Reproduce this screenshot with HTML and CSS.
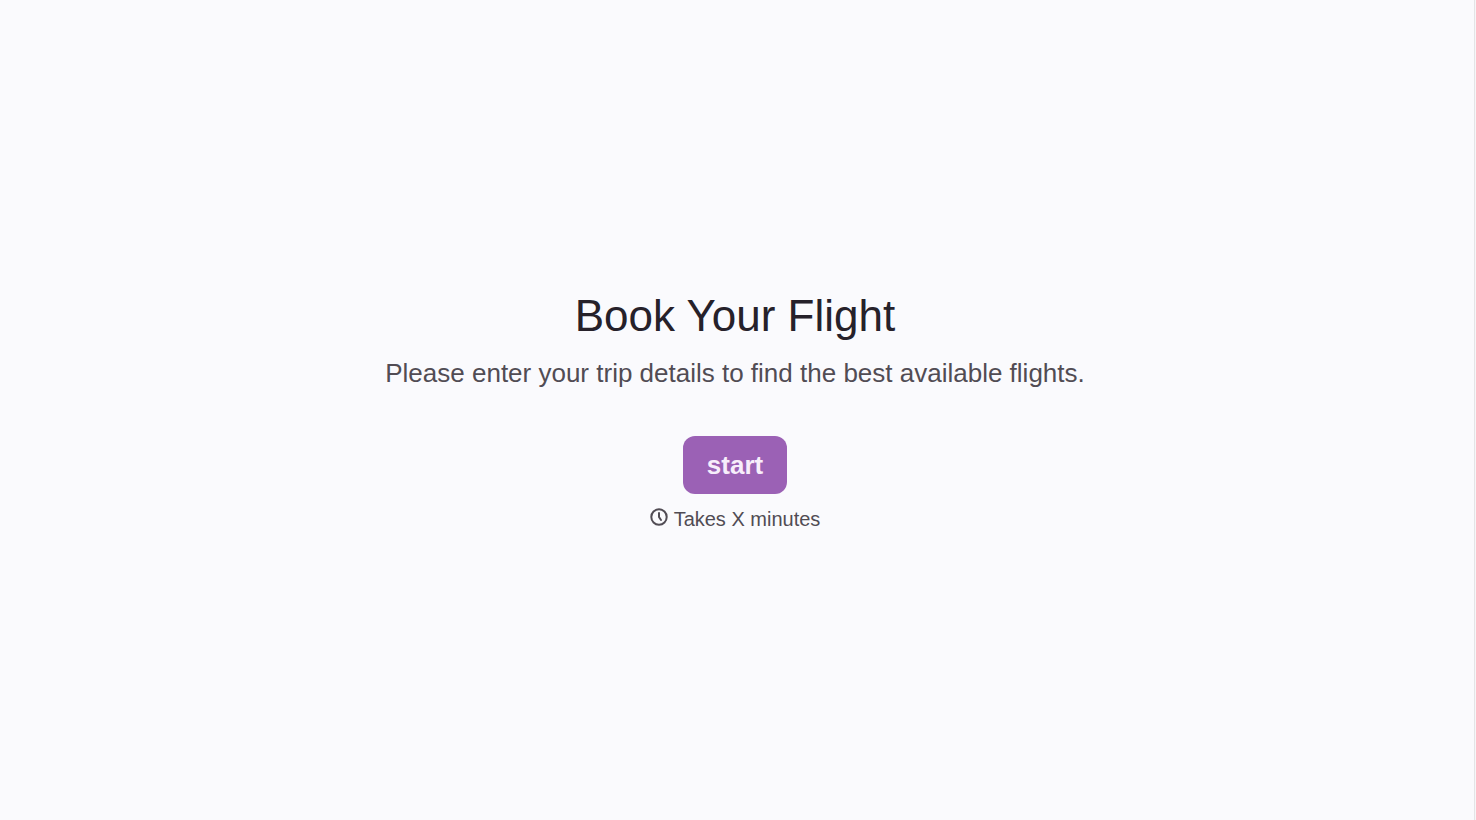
FILE: index.html
```html
<!DOCTYPE html>
<html lang="en">
<head>
    <meta charset="UTF-8">
    <meta name="viewport" content="width=device-width, initial-scale=1.0">
    <title>Book Your Flight</title>
    <link rel="stylesheet" href="styles.css">
</head>
<body>
    <main class="welcome">
        <h1>Book Your Flight</h1>
        <p class="description">Please enter your trip details to find the best available flights.</p>
        <button type="button" class="start-btn">start</button>
        <p class="duration">
            <svg class="clock-icon" viewBox="0 0 18 18" aria-hidden="true">
                <circle cx="9" cy="9" r="7.7"></circle>
                <path d="M9 5V9l2 3"></path>
            </svg>
            <span>Takes X minutes</span>
        </p>
    </main>
</body>
</html>
```
FILE: styles.css
```css
* {
    box-sizing: border-box;
}
body {
    margin: 0;
    padding-right: 1px;
    font-family: "Liberation Sans", Arial, sans-serif;
    background-color: #f6f6f8;
    color: #26212a;
}
.welcome {
    min-height: 100vh;
    padding: 24px 28px 24px 24px;
    background-color: #fafafd;
    border-right: 1px solid #e4e4e6;
    display: flex;
    flex-direction: column;
    align-items: center;
    justify-content: center;
    text-align: center;
}
.welcome h1 {
    margin: 0 0 12px;
    font-size: 44px;
    font-weight: 400;
    line-height: 56px;
}
.description {
    margin: 0 0 46px;
    font-size: 26px;
    line-height: 34px;
    color: #514c54;
}
.start-btn {
    padding: 12px 24px;
    border: none;
    border-radius: 12px;
    background-color: #9b61b5;
    color: #f7eefb;
    font-family: inherit;
    font-size: 26px;
    font-weight: 700;
    line-height: 34px;
    cursor: pointer;
}
.duration {
    display: flex;
    align-items: baseline;
    gap: 6px;
    margin: 12px 0 0;
    font-size: 20px;
    line-height: 26px;
    color: #514c54;
}
.clock-icon {
    width: 18px;
    height: 18px;
    fill: none;
    stroke: currentColor;
    stroke-width: 2;
    stroke-linecap: round;
}
```
